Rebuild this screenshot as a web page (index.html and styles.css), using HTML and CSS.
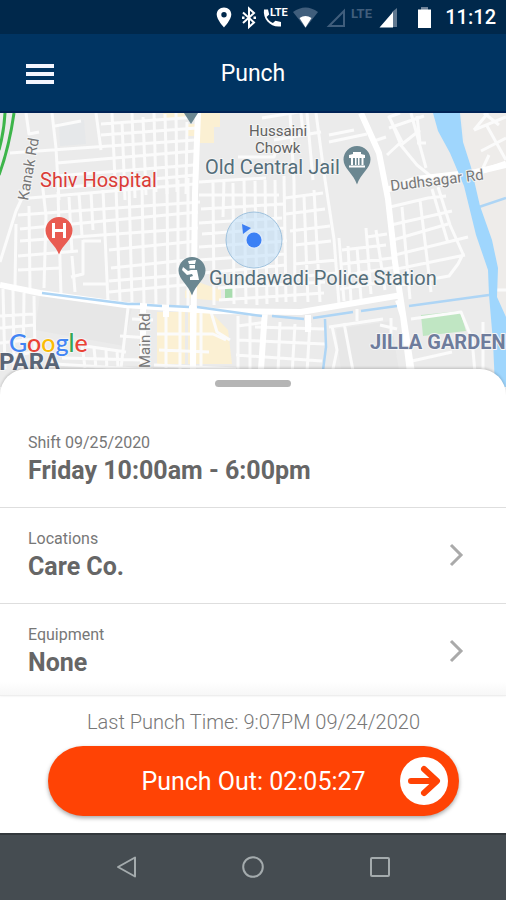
FILE: index.html
```html
<!DOCTYPE html>
<html lang="en">
<head>
<meta charset="utf-8">
<meta name="viewport" content="width=device-width, initial-scale=1">
<title>Punch</title>
<link rel="stylesheet" href="styles.css">
</head>
<body>
<div class="status">
  <svg class="status-icons" width="220" height="34" viewBox="213 0 220 34" aria-hidden="true">
    <path fill="#fff" fill-rule="evenodd" d="M224 7.500c-4.200 0-7.300 3.100-7.300 7.100 0 5.200 7.300 12.900 7.300 12.900s7.300-7.700 7.300-12.900c0-4-3.100-7.100-7.300-7.100zm0 4.500a2.700 2.700 0 1 1 0 5.400 2.700 2.700 0 0 1 0-5.400z"/>
    <path fill="none" stroke="#fff" stroke-width="2" d="M243 12.500l11 10-5 4.500V8.500l5 4.500-11 10"/>
    <path fill="#fff" d="M242 16.500h2.500v2.500H242zM253.500 16.500h2.500v2.500h-2.500z"/>
    <path fill="#fff" d="M264 9.500h4l1.200 5-2.600 2.500c1.700 3 3.400 4.700 6.300 6.100l2.500-2.400 5.600 1.200v4.500c-10 1.500-18.500-7-17-16.900z"/>
    <text class="lte" fill="#fff" x="270" y="16">LTE</text>
    <path fill="#405e7c" d="M293 12q12.500-9 25 0l-12.500 16z"/>
    <path fill="#fff" d="M299.500 18q6-4 12 0l-6 9.500z"/>
    <path fill="none" stroke="#405e7c" stroke-width="2" d="M329 26h15V11z"/>
    <text class="lte lte-dim" fill="#405e7c" x="351" y="18">LTE</text>
    <path fill="#607890" d="M392 12l5-4v19h-5z"/>
    <path fill="#fff" d="M379.500 27.500L393 12v15.500z"/>
    <path fill="#708399" d="M421 7h7v3h-7z"/>
    <path fill="#fff" d="M418 9.500h13V28h-13z"/>
  </svg>
  <time class="clock">11:12</time>
</div>
<header class="appbar">
  <button class="menu" type="button" aria-label="Menu"><span></span><span></span><span></span></button>
  <h1>Punch</h1>
</header>
<main>
  <svg class="map" viewBox="0 113 506 274" preserveAspectRatio="xMidYMin slice" role="img" aria-label="Map">
    <path fill="#ebebeb" d="M0 113h506v274H0z"/>
    <path fill="#eeecea" d="M462 113h44v210l-12-30-24-103z"/>
    <path fill="#e6e8ea" d="M59 123l25-3 2 24-26 2z"/>
    <path fill="#e7e7e7" d="M40 296l92 12-8 38-89-16zM336 329l55-8 8 50h-58z"/>
    <path fill="#fbf0d3" d="M198 113h22v14h-6v16h-14v-16h-2zM163 113h22v5h-22zM188 124h7v12h-7zM195 281l26 9v11l-36-3v-7zM157 312h28v52h-28zM188 309l23 3 17 18 4 34h-44z"/>
    <path fill="#a8dcae" d="M225 287h8v13h-8z"/>
    <path fill="#c0e6c3" d="M421 315l39-4 6 20-43 5z"/>
    <g class="streets">
      <path d="M10 153L52 150 195 140M26 113l3 21 10-2M52 113l4 35 3 52M55 126l26-5M96 113l5 37M101 124l96-7M112 113l3 67M122 121l3 79M132 113l3 85M143 117l3 78M154 113l2 79M165 114l2 80M176 113l1 79M187 122l-1 72M101 135l96-7M57 163l138-12M56 176l138-11M60 188l135-13M18 199l177-15M18 215l182-13M20 229l178-17M20 241l178-13M18 256l60-5M109 250l88-9M18 270l43-2M61 252l1 0M111 268l85-9M109 281l85-7M109 292l85-8"/>
      <path d="M42 181l4 35-2 72M58 192l3 103M29 206l1 84M16 224l-1 63M69 197l3 55M79 194l3 42M91 192l2 38M103 190l5 112M116 187l4 114M129 185l3 117M142 184l2 120M154 183l2 122M167 181l1 125M178 180v127M188 178v129"/>
      <path d="M0 262l16-51 14-30M72 256l3 36M83 240v34l-12 3M83 241h18M83 284h24"/>
      <path d="M199 182l67-4M199 195h80M201 209l82-5M199 223l83-5M199 247l88-6M199 260l87-6M203 273l83-8M218 288l107-6M219 300l105-7M202 234l83-6M213 182l1 123M224 179l-1 38M233 183l1 121M244 179l2 125M255 181l2 124M265 180l2 124M275 180l2 122M284 176l2 126"/>
      <path d="M294 180l1 122M304 196l4 106M314 190l6 112M238 157h36l4-12M290 137l25-4M262 118l49-8M274 140l47-8M301 113l2 20M290 113l4 68M316 113l8 60 10 66 5 65M307 113l6 67M329 142l38-8M329 135l25-5M285 198l38-5M286 214l39-5M290 231l40-5M295 245l36-4M294 264l43-4M296 277l40-4"/>
      <path d="M379 113l0 0M400 113l-11 4 13 25M389 116l11 27-13 12M399 143l18 22 26 21M411 113l15 55M389 128l35-12M401 145l19-15M417 116l3 27M417 143h9M374 141l12-4M390 207l38-9 18-2M391 225l61-14M393 240l55-16M395 255l73-18M397 269l68-14M399 285l50-9 9-12 5-10-13-29-12-38M402 207l8 92M420 200l11 92M432 189l16 54M376 230l9 60M366 228l5 66M348 246l3 55M339 238l5 63M357 247l4 52M342 250l44-5M342 264l50-6M340 276l57-9M340 289l56-9M367 237l20-3"/>
      <path d="M474 130l32-13M481 151l25-13M474 130l14-17M487 126l19 34M484 113l15 12M489 155l-7 15M0 316l33-2M0 328l34-3M0 343l35-4M0 358l34-6M3 289l2 80M13 290l1 79M24 293l-1 77M34 296l1 62M82 344l3 24M94 348l2 20M106 350l1 20M117 350l1 18M128 308l-7 60M85 346l41 6M55 364l98 6M62 358l80 2M120 336l30 2M132 319l21 1"/>
      <path d="M166 312v56M180 311v59M201 313v55M157 334h56l13 6M159 350l50 2M154 365l82 4M211 312l6 20 13 8M238 316v58M250 315v58M238 326l29-4M237 340l88 4M236 355l86 6M280 322l-2 50M295 324l-3 51M310 323l-3 49M255 327l69 2M329 327l54-8M332 326l5 24-5 24M344 323l10 53M391 318v18M380 325l17 4M411 319l50-7 11 27 3 34M412 361l40-9M483 322v60M357 309v12M496 290h10"/>
    </g>
    <g class="roads">
      <path d="M198 113l-3 80-2 175M361 113l18 40 9 46 7 63 17 111M0 285l40 8 85 12 90 6 86 1 101-17M265 310l-5 74M398 300l5 16 8 65M308 315v17M166 305v12M193 305v65M506 165l-30 7-60 7-32 12M143 306v67"/>
    </g>
    <path fill="none" stroke="#aed5f5" stroke-width="2.500" d="M42 293l86 11h12M147 305l15 1M169 306l20 1M197 307l50 7 15 2M272 316l32 3M313 318l40-6M361 311l36-5M409 306l80-11M325 319l1 28-4 31M479 207l27-9"/>
    <path fill="#9fd6fd" d="M433 113h27l3 29 8 25 9 39 12 34 6 28-1 29 9 20v70h-11l-2-45-4-47-1-25-12-35-12-49-14-33-12-22z"/>
    <path fill="none" stroke="#fff" stroke-width="5" d="M480 172l26-9"/>
    <g fill="none" stroke="#3db54a" stroke-width="3"><path d="M5 113Q4 132-1 150M14 113Q9 148-1 175"/></g>
    <circle cx="254" cy="240" r="28" fill="#b9dcf8" fill-opacity=".5" stroke="#9fc2de"/>
    <path fill="#3d7ff3" d="M242 224l9 4-8 6z"/>
    <circle cx="254" cy="240" r="9" fill="#dce9fa"/><circle cx="254" cy="240" r="7.500" fill="#3b80f5"/>
    <g fill="#6b8791">
      <path d="M184 113h14l-7 11z"/>
      <path d="M357 146a13.500 13.500 0 0 0-13.500 13.500c0 9 10 14 13.500 25 3.500-11 13.500-16 13.500-25A13.500 13.500 0 0 0 357 146z"/>
      <path d="M192 257a13.500 13.500 0 0 0-13.500 13.500c0 9 10 14 13.500 25 3.500-11 13.500-16 13.500-25A13.500 13.500 0 0 0 192 257z"/>
    </g>
    <path fill="#fff" d="M349 158v-3l4-1v-2h8v2l4 1v3zM351 158h2v7h-2zM355 158h1.500v7H355zM358 158h1.500v7H358zM361.500 158h2v7h-2zM349 165.500h16v2h-16z"/>
    <path fill="#fff" d="M188 261l8-1-1 4h-6zM189.500 265h5.500v3.500h-5.500zM183 267l5 4 3-1h6l2 10h-9v-3l3-1-1-2-5 1-5-5z"/>
    <path fill="#e95b51" d="M59 217a13.500 13.500 0 0 0-13.500 13.500c0 9 10 14 13.500 24 3.500-10 13.500-15 13.500-24A13.500 13.500 0 0 0 59 217z"/>
    <path fill="none" stroke="#fff" stroke-width="3" d="M53.500 223v15M64.500 223v15M53 230.500h12"/>
    <g class="labels">
      <text class="poi red" x="40" y="187">Shiv Hospital</text>
      <text class="road-name" transform="translate(28 201) rotate(-80)">Kanak Rd</text>
      <text class="area" x="249" y="136">Hussaini</text>
      <text class="area" x="255" y="153">Chowk</text>
      <text class="poi" x="205" y="174">Old Central Jail</text>
      <text class="poi" x="209" y="285">Gundawadi Police Station</text>
      <text class="road-name" transform="translate(391 191) rotate(-7)">Dudhsagar Rd</text>
      <text class="road-name" transform="translate(150 368) rotate(-90)">Main Rd</text>
      <text class="district" x="370" y="349">JILLA GARDEN</text>
      <text class="district dark" x="-1" y="370">PARA</text>
      <text class="google" x="9" y="352"><tspan fill="#4285f4">G</tspan><tspan fill="#ea4335">o</tspan><tspan fill="#fbbc05">o</tspan><tspan fill="#4285f4">g</tspan><tspan fill="#34a853">l</tspan><tspan fill="#ea4335">e</tspan></text>
    </g>
  </svg>
  <section class="sheet">
    <div class="handle"></div>
    <div class="row">
      <div><p class="label">Shift 09/25/2020</p><p class="value">Friday 10:00am - 6:00pm</p></div>
    </div>
    <button class="row" type="button">
      <span><span class="label">Locations</span><span class="value">Care Co.</span></span>
      <svg width="16" height="24" viewBox="0 0 16 24" aria-hidden="true"><path d="M2 2l10 10L2 22"/></svg>
    </button>
    <button class="row" type="button">
      <span><span class="label">Equipment</span><span class="value">None</span></span>
      <svg width="16" height="24" viewBox="0 0 16 24" aria-hidden="true"><path d="M2 2l10 10L2 22"/></svg>
    </button>
  </section>
  <footer class="punch">
    <p>Last Punch Time: 9:07PM 09/24/2020</p>
    <button class="punch-out" type="button">
      <span>Punch Out: 02:05:27</span>
      <svg width="48" height="48" viewBox="0 0 48 48" aria-hidden="true"><circle cx="24" cy="24" r="24" fill="#fff"/><path d="M11 24h25M24 12l13 12-13 12"/></svg>
    </button>
  </footer>
</main>
<nav class="sysnav">
  <button type="button" aria-label="Back"><svg width="24" height="24" viewBox="0 0 24 24"><path d="M21 2.500v19L4 12z"/></svg></button>
  <button type="button" aria-label="Home"><svg width="24" height="24" viewBox="0 0 24 24"><circle cx="12" cy="12" r="9.800"/></svg></button>
  <button type="button" aria-label="Recent apps"><svg width="24" height="24" viewBox="0 0 24 24"><rect x="3" y="3" width="18" height="18" rx="1"/></svg></button>
</nav>
</body>
</html>
```
FILE: styles.css
```css
* { box-sizing: border-box; }
body {
  margin: 0;
  min-height: 100vh;
  display: flex;
  flex-direction: column;
  font-family: Roboto, "Liberation Sans", sans-serif;
  background: #fff;
}
h1, p { margin: 0; font-weight: 400; }
button { border: 0; padding: 0; background: none; font: inherit; text-align: left; }
.status {
  display: flex;
  justify-content: flex-end;
  align-items: center;
  gap: 12px;
  height: 34px;
  padding-right: 10px;
  background: #00284b;
  color: #fff;
}
.lte { font-size: 11px; font-weight: 700; }
.lte-dim { font-size: 13px; }
.clock { font-size: 20px; line-height: 36px; font-weight: 500; }
.appbar {
  display: grid;
  grid-template-columns: 28px 1fr 28px;
  align-items: center;
  height: 79px;
  padding: 2px 26px 0;
  background: #003462;
  border-bottom: 2px solid #002356;
  color: #fff;
}
.menu { display: grid; gap: 4px; }
.menu span { height: 4px; background: #f4f6ff; }
.appbar h1 { font-size: 23px; line-height: 32px; text-align: center; }
main { flex: 1; display: flex; flex-direction: column; }
.map { display: block; width: 100%; flex: 1 0 274px; height: 274px; }
.streets { fill: none; stroke: #fbfbfb; stroke-width: 3; stroke-linejoin: round; }
.roads { fill: none; stroke: #fff; stroke-width: 6; stroke-linejoin: round; }
.labels { paint-order: stroke; stroke: #f5f5f5; stroke-width: 2px; stroke-linejoin: round; }
.poi { font-size: 20px; fill: #546e7a; }
.red { fill: #db3c37; }
.area { font-size: 15px; fill: #616161; }
.road-name { font-size: 15px; fill: #777; }
.district { font-size: 20px; font-weight: 700; fill: #6e7c9c; }
.dark { font-size: 24px; fill: #5a6678; }
.google { font-family: Lato, sans-serif; font-size: 25px; font-weight: 500; }
.sheet {
  position: relative;
  margin-top: -18px;
  padding-top: 11px;
  border-radius: 26px 26px 0 0;
  background: #fff;
  box-shadow: 0 -1px 3px rgba(0, 0, 0, .2);
}
.handle { width: 76px; height: 7px; margin: 0 auto 25px; border-radius: 4px; background: #b5b5b5; }
.row {
  display: flex;
  align-items: center;
  justify-content: space-between;
  width: 100%;
  padding: 21px 41px 18px 28px;
  border-bottom: 1px solid #dedede;
}
.row:last-child { padding-bottom: 14px; border-color: #eee; background: linear-gradient(#fff 85%, #f7f7f7); }
.label { display: block; font-size: 16px; line-height: 20px; color: #777; }
.value { display: block; font-size: 25px; line-height: 36px; font-weight: 700; color: #666; }
.row svg { margin-bottom: 5px; fill: none; stroke: #aaa; stroke-width: 3; }
.punch { padding: 11px 47px 17px 48px; text-align: center; background: #fff; }
.punch p { font-size: 20px; line-height: 30px; font-weight: 300; color: #777; }
.punch-out {
  display: grid;
  grid-template-columns: 1fr 48px;
  align-items: center;
  width: 100%;
  height: 70px;
  margin-top: 9px;
  padding: 0 11px 0 59px;
  border-radius: 35px;
  background: #ff4305;
  box-shadow: 0 2px 4px rgba(0, 0, 0, .35);
  color: #fff;
  font-size: 25px;
  text-align: center;
}
.punch-out path { fill: none; stroke: #ff4305; stroke-width: 6; stroke-linecap: round; stroke-linejoin: round; }
.sysnav {
  display: flex;
  justify-content: center;
  align-items: center;
  gap: 103px;
  height: 67px;
  padding-bottom: 2px;
  border-top: 2px solid #32383c;
  background: #454c51;
}
.sysnav svg { display: block; fill: none; stroke: #a4abad; stroke-width: 2; stroke-linejoin: round; }
```
